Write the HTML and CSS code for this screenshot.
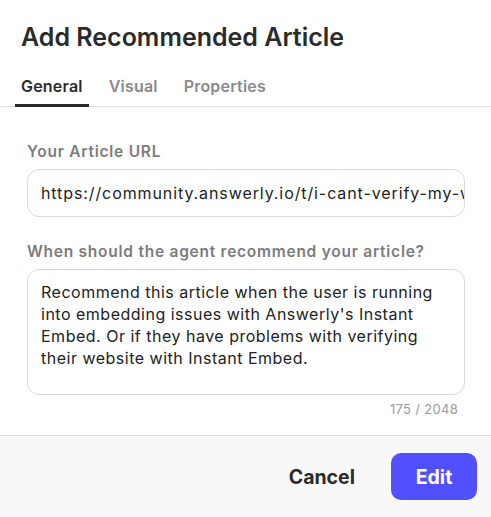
FILE: index.html
```html
<!DOCTYPE html>
<html lang="en">
<head>
    <meta charset="UTF-8">
    <meta name="viewport" content="width=device-width, initial-scale=1.0">
    <title>Add Recommended Article</title>
    <link rel="stylesheet" href="styles.css">
</head>
<body>
    <div class="dialog">
        <header class="dialog-header">
            <h1>Add Recommended Article</h1>
        </header>

        <nav class="tabs">
            <span class="tab active">General</span>
            <span class="tab">Visual</span>
            <span class="tab">Properties</span>
        </nav>

        <div class="dialog-body">
            <div class="field">
                <label class="field-label">Your Article URL</label>
                <div class="input">https://community.answerly.io/t/i-cant-verify-my-website-with-instant-embed</div>
            </div>

            <div class="field">
                <label class="field-label">When should the agent recommend your article?</label>
                <div class="textarea">Recommend this article when the user is running into embedding issues with Answerly's Instant Embed. Or if they have problems with verifying their website with Instant Embed.</div>
                <div class="counter">175 / 2048</div>
            </div>
        </div>

        <footer class="dialog-footer">
            <button class="btn btn-cancel">Cancel</button>
            <button class="btn btn-primary">Edit</button>
        </footer>
    </div>
</body>
</html>
```

FILE: styles.css
```css
* {
    margin: 0;
    padding: 0;
    box-sizing: border-box;
}

body {
    background: #fff;
    color: #222;
    font-family: 'Inter', 'Noto Sans', sans-serif;
    width: 491px;
    height: 517px;
    overflow: hidden;
}

.dialog {
    display: flex;
    flex-direction: column;
    height: 517px;
}

.dialog-header {
    padding: 22px 21px 0;
}

h1 {
    font-size: 25px;
    line-height: 30px;
    font-weight: 600;
    color: #2b2b2b;
}

.tabs {
    display: flex;
    gap: 14px;
    margin-top: 24px;
    padding: 0 15px;
    border-bottom: 1px solid #e3e3e3;
}

.tab {
    padding: 0 6px 8px;
    font-size: 16px;
    line-height: 20px;
    font-weight: 600;
    letter-spacing: 0.2px;
    color: #8a8a8a;
    border-bottom: 3px solid transparent;
    margin-bottom: -1px;
}

.tab.active {
    color: #2b2b2b;
    border-bottom-color: #2b2b2b;
}

.dialog-body {
    flex: 1;
    padding: 35px 26px 0 27px;
}

.field {
    display: flex;
    flex-direction: column;
}

.field + .field {
    margin-top: 25px;
}

.field-label {
    font-size: 15.5px;
    line-height: 20px;
    font-weight: 600;
    letter-spacing: 0.75px;
    color: #7c7c7c;
    margin-bottom: 7px;
}

.input {
    height: 48px;
    border: 1px solid #d9d9d9;
    border-radius: 12px;
    padding: 0 13px;
    font-size: 16px;
    letter-spacing: 0.9px;
    line-height: 46px;
    color: #222;
    white-space: nowrap;
    overflow: hidden;
}

.textarea {
    height: 126px;
    border: 1px solid #d9d9d9;
    border-radius: 12px;
    padding: 11px 13px;
    font-size: 16px;
    letter-spacing: 0.5px;
    line-height: 22px;
    color: #222;
}

.counter {
    align-self: flex-end;
    margin-top: 6px;
    margin-right: 7px;
    font-size: 13px;
    letter-spacing: 0.3px;
    line-height: 16px;
    color: #9a9a9a;
}

.dialog-footer {
    height: 82px;
    display: flex;
    justify-content: flex-end;
    align-items: center;
    gap: 36px;
    padding: 0 14px 0 0;
    background: #f8f8f8;
    border-top: 1px solid #d9d9d9;
}

.btn {
    border: none;
    font-family: inherit;
    font-size: 19.5px;
    font-weight: 700;
    cursor: pointer;
}

.btn-cancel {
    background: none;
    color: #2b2b2b;
}

.btn-primary {
    width: 86px;
    height: 47px;
    border-radius: 10px;
    background: #5150ff;
    color: #fff;
}
```
